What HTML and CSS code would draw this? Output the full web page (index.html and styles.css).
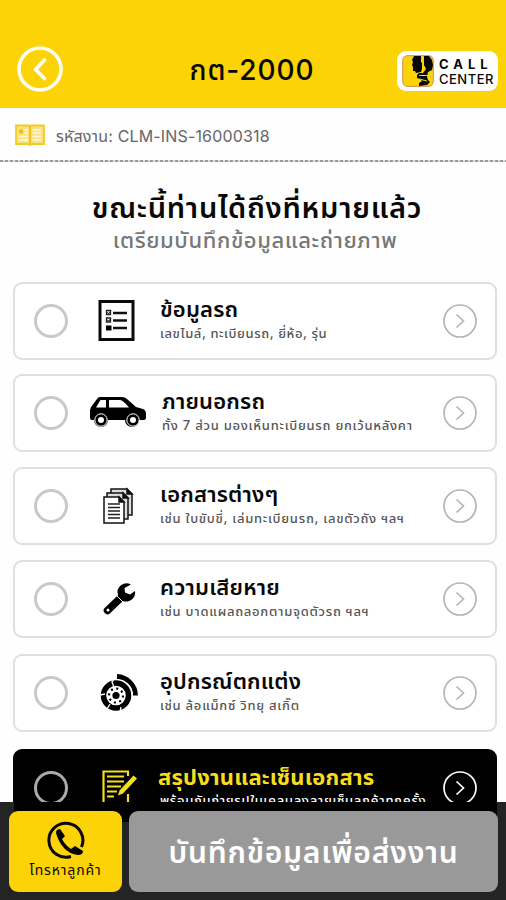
FILE: index.html
```html
<!DOCTYPE html>
<html lang="th">
<head>
<meta charset="utf-8">
<title>กต-2000</title>
<link rel="stylesheet" href="styles.css">
</head>
<body>
<div class="app">
  <header class="top">
    <svg class="back" viewBox="0 0 46 46"><circle cx="23" cy="23" r="21" stroke-width="3.600"/><path d="M27.500 14L18.500 23.500l9 9" stroke-width="3.600"/></svg>
    <h1>กต-2000</h1>
    <div class="call-center">
      <svg viewBox="0 0 32 32"><rect x=".7" y=".7" width="30.600" height="30.600" rx="5" fill="#fcd307" stroke="#dc9c55" stroke-width="1.200"/><path d="M12 1h7v6l1 1v6l-1 3-5 1-1-2h-2v-4l-1-2 1-3-1-2zM22 1h5l3 4 1 5-1 5-4 2-1 5 1 3 2 2-3 3-8 1v-3l3-2-2-2-3-1v-3l2-2h4l3-4-2-4z" fill="#080808"/><path d="M17 20.500h9M17 24l8 2" stroke="#fcd307" stroke-width="1"/></svg>
      <div class="cc-text"><b class="cc-a">CALL</b><b class="cc-b">CENTER</b></div>
    </div>
  </header>
  <div class="job">
    <svg viewBox="0 0 30 22"><path d="M1 1.500H14l1 1 1-1H29V20H17l-2 1-2-1H1z" fill="#fbe27b" stroke="#f3cb26" stroke-width="1.800"/><path d="M15 2v18" stroke="#f0c322" stroke-width="2"/><path d="M4 5.500h4v4H4z" fill="#e9bd1d"/><path d="M9.500 6H13M9.500 9H13M4 12.500h9M4 16h9M17.500 6H26M17.500 9H26M17.500 12.500H26M17.500 16H26" stroke="#fffbe0" stroke-width="1.300"/></svg>
    <span>รหัสงาน: CLM-INS-16000318</span>
  </div>
  <div class="rule"></div>
  <main>
    <h2>ขณะนี้ท่านได้ถึงที่หมายแล้ว</h2>
    <p class="lead">เตรียมบันทึกข้อมูลและถ่ายภาพ</p>
    <section class="list">
      <article class="card">
        <i class="radio"></i>
        <svg class="icon" viewBox="0 0 60 44"><path d="M13 2.500h33v38H13z" fill="#fff" stroke="#0a0a0a" stroke-width="3"/><path d="M26 14h14M26 21.500h14M26 29h14" stroke="#111" stroke-width="2.400"/><path d="M19.500 11.500h4v4h-4zM19.500 19h4v4h-4z" fill="none" stroke="#222" stroke-width="1.300"/><path d="M19 26.500h5.500v5H19z"/><path d="M20 13.500l2 1 2-3M20 21l2 1 2-3" fill="none" stroke="#222"/></svg>
        <div class="copy"><h3>ข้อมูลรถ</h3><p class="tight">เลขไมล์, ทะเบียนรถ, ยี่ห้อ, รุ่น</p></div>
        <svg class="go" viewBox="0 0 34 34"><circle cx="17" cy="17" r="16"/><path d="M13.500 10.500L20.500 17l-7 6.500"/></svg>
      </article>
      <article class="card">
        <i class="radio"></i>
        <svg class="icon" viewBox="0 0 60 44"><path d="M13 6h22q3 0 5 2l9 8 7 2q3 1 3 5v4q0 2-2 2h-5a7 7 0 0 1-14 0H21a7 7 0 0 1-14 0H5q-2 0-2-2v-8l1-3 6-8q1-2 3-2z"/><path d="M13.500 9H19v7.500H9zM22 9h11q3 0 9 7.500H22z" fill="#fff"/><circle cx="14" cy="29" r="6.200" stroke="#fff"/><circle cx="46" cy="29" r="6.200" stroke="#fff"/><circle cx="14" cy="29" r="3" fill="#fff"/><circle cx="46" cy="29" r="3" fill="#fff"/></svg>
        <div class="copy second"><h3>ภายนอกรถ</h3><p>ทั้ง 7 ส่วน มองเห็นทะเบียนรถ ยกเว้นหลังคา</p></div>
        <svg class="go" viewBox="0 0 34 34"><circle cx="17" cy="17" r="16"/><path d="M13.500 10.500L20.500 17l-7 6.500"/></svg>
      </article>
      <article class="card">
        <i class="radio"></i>
        <svg class="icon" viewBox="0 0 60 44"><g fill="#ddd" stroke="#111" stroke-width="1.500"><path d="M24 5h16l5 5v21H24z"/><path d="M40 5v5h5z" fill="#111"/><path d="M20 9h16l5 5v21H20z"/><path d="M36 9v5h5z" fill="#111"/><path fill="#fff" d="M17 13h15l5 5v21H17z"/><path d="M32 13v5h5z" fill="#111"/></g><path d="M21 20h12M21 23.500h12M21 27h12M21 30.500h12M21 34h12" stroke="#222" stroke-width="1.500"/></svg>
        <div class="copy"><h3>เอกสารต่างๆ</h3><p>เช่น ใบขับขี่, เล่มทะเบียนรถ, เลขตัวถัง ฯลฯ</p></div>
        <svg class="go" viewBox="0 0 34 34"><circle cx="17" cy="17" r="16"/><path d="M13.500 10.500L20.500 17l-7 6.500"/></svg>
      </article>
      <article class="card">
        <i class="radio"></i>
        <svg class="icon" viewBox="0 0 60 44"><path d="M44 7.500A9 9 0 0 0 31 18q1 6 7 6.500A9 9 0 0 0 48 14l-5 3.500-5-2-.5-4.500z"/><path d="M20.500 33.500L33 21.500" stroke="#000" stroke-width="7.500" stroke-linecap="round"/><path d="M29 18l7 7" stroke="#fff" stroke-width="1"/><circle cx="21" cy="33" r="1.500" fill="#fff"/></svg>
        <div class="copy"><h3>ความเสียหาย</h3><p>เช่น บาดแผลถลอกตามจุดตัวรถ ฯลฯ</p></div>
        <svg class="go" viewBox="0 0 34 34"><circle cx="17" cy="17" r="16"/><path d="M13.500 10.500L20.500 17l-7 6.500"/></svg>
      </article>
      <article class="card">
        <i class="radio"></i>
        <svg class="icon" viewBox="0 0 60 44"><circle cx="29" cy="24.500" r="12.500" fill="#fff" stroke="#000" stroke-width="5.500"/><path d="M30 5.500A19.500 19.500 0 0 1 48.500 24.500" fill="none" stroke="#000" stroke-width="5"/><path d="M30 8.500A16 16 0 0 1 45.500 24.500" fill="none" stroke="#fff" stroke-width="1.200"/><path d="M27 8l-2 3 2 5M13 24l5-1M20 38l3-5M33 41l1-5" fill="none" stroke="#fff" stroke-width="1.300"/><circle cx="29" cy="24.500" r="3.600"/><circle cx="29" cy="24.500" r="7" fill="none" stroke="#000" stroke-width="2.200" stroke-dasharray="2 3.500"/></svg>
        <div class="copy"><h3>อุปกรณ์ตกแต่ง</h3><p>เช่น ล้อแม็กซ์ วิทยุ สเกิ๊ต</p></div>
        <svg class="go" viewBox="0 0 34 34"><circle cx="17" cy="17" r="16"/><path d="M13.500 10.500L20.500 17l-7 6.500"/></svg>
      </article>
      <article class="card dark">
        <i class="radio"></i>
        <svg class="icon" viewBox="0 0 60 44"><path d="M41 10V5.500H16.500v32H41V28" fill="none" stroke="#f5dd1d" stroke-width="2.200"/><path d="M20 10.500h17M20 15.500h17M20 20.500h14M20 25.500h10M20 30.500h7" stroke="#f5dd1d" stroke-width="1.900"/><path d="M31 29.500l1.500-5L46.500 9.500l3.500 3L36 27.500z" fill="#f5dd1d"/></svg>
        <div class="copy"><h3>สรุปงานและเซ็นเอกสาร</h3><p>พร้อมกับถ่ายรูปใบเคลมลงลายเซ็นลูกค้าทุกครั้ง</p></div>
        <svg class="go" viewBox="0 0 34 34"><circle cx="17" cy="17" r="16"/><path d="M13.500 10.500L20.500 17l-7 6.500"/></svg>
      </article>
    </section>
  </main>
  <footer>
    <button class="phone"><svg viewBox="0 0 40 40"><path d="M25 36.500A17 17 0 1 1 35.500 27" fill="none" stroke="#090909" stroke-width="3"/><path d="M10 13q0-4 4-4l5 7-3 3q3 6 9 10l4-3 8 5q0 4-5 4Q16 33 10 13z"/></svg><span>โทรหาลูกค้า</span></button>
    <button class="save">บันทึกข้อมูลเพื่อส่งงาน</button>
  </footer>
</div>
</body>
</html>
```
FILE: styles.css
```css
* { box-sizing: border-box; }
body { margin: 0; font-family: "Inter", "Noto Sans Thai", "Noto Sans", sans-serif; color: #080808; background: #fefefe; }
.app { height: 900px; overflow: hidden; display: flex; flex-direction: column; }
h1, h2, h3, p { margin: 0; white-space: nowrap; font-weight: 500; }
.top { height: 108px; flex: none; background: #fcd307; padding: 46px 8px 0 17px; display: grid; grid-template-columns: 46px 1fr 101px; align-items: start; }
.back { width: 46px; height: 46px; fill: none; stroke: #fffdf0; stroke-linecap: round; }
h1 { font-size: 28px; line-height: 49px; letter-spacing: .9px; text-align: center; padding-left: 44px; }
.call-center { margin-top: 5px; height: 40px; background: #fff; border-radius: 9px; padding: 0 5px; display: flex; align-items: center; gap: 5px; }
.call-center svg { width: 32px; height: 32px; flex: none; }
.cc-text { display: flex; flex-direction: column; gap: 1px; font-size: 13px; line-height: 14px; }
.cc-a { letter-spacing: 5px; }
.cc-b { font-weight: 500; letter-spacing: .5px; }
.job { height: 52px; flex: none; padding: 1px 15px 0; display: flex; align-items: center; gap: 11px; color: #666; font-size: 16px; white-space: nowrap; }
.job span { letter-spacing: .16px; padding-top: 5px; }
.job svg { width: 30px; height: 22px; }
.rule { height: 2px; flex: none; background: repeating-linear-gradient(90deg, #999 0 3px, #ddd 3px 5px); }
main { flex: 1; min-height: 0; overflow: hidden; padding: 0 9px 0 13px; }
h2 { height: 63px; padding: 26px 0 0 4px; font-size: 29px; font-weight: 600; line-height: 40px; letter-spacing: .75px; text-align: center; }
.lead { height: 57px; text-align: center; font-size: 22px; line-height: 31px; letter-spacing: .6px; color: #777; }
.card { height: 78px; border: 2px solid #dfdfdf; border-radius: 9px; display: flex; align-items: center; padding: 0 18px 0 19px; margin-bottom: 14px; background: #fff; }
.card:nth-child(2), .card:nth-child(3) { margin-bottom: 15px; }
.card:nth-child(4) { margin-bottom: 16px; }
.card:nth-child(5) { margin-bottom: 17px; }
.radio { width: 34px; height: 34px; border: 3px solid #c9c9c9; border-radius: 50%; flex: none; }
.icon { width: 60px; height: 44px; margin-left: 19px; flex: none; }
.copy { flex: 1; min-width: 0; margin: -5px 0 0 13px; }
.copy.second { margin-left: 15px; }
h3 { font-size: 22px; font-weight: 600; line-height: 28px; letter-spacing: .2px; }
.copy p { font-size: 13px; line-height: 20px; letter-spacing: .73px; color: #555; }
.copy .tight { letter-spacing: .58px; }
.go { width: 34px; height: 34px; flex: none; fill: none; stroke: #b5b5b5; stroke-width: 1.700; }
.card.dark { background: #000; border-color: #000; }
.dark .copy { margin: -1px 0 0 11px; }
.dark h3 { color: #f5dd1d; font-weight: 700; letter-spacing: .2px; line-height: 25px; }
.dark .copy p { color: #fff; padding-left: 2px; letter-spacing: .68px; }
.dark .radio { border-color: #aaa; }
.dark .go { stroke: #fff; }
footer { height: 98px; flex: none; background: linear-gradient(#000, #000) 14px 0 / 483px 20px no-repeat #242424; padding: 9px 8px 8px 9px; display: flex; gap: 7px; }
button { border: 0; padding: 0; border-radius: 9px; font-family: inherit; white-space: nowrap; }
.phone { width: 113px; background: #fcd307; display: flex; flex-direction: column; align-items: center; color: #080808; font-size: 14px; letter-spacing: .85px; }
.phone svg { width: 40px; height: 40px; margin-top: 9px; }
.save { flex: 1; background: #999; color: #fff; font-size: 30px; font-weight: 600; letter-spacing: .75px; padding-top: 4px; }
```
